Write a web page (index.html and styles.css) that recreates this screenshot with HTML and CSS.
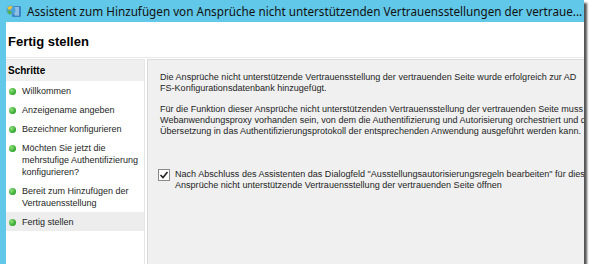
FILE: index.html
```html
<!DOCTYPE html>
<html lang="de">
<head>
    <meta charset="UTF-8">
    <title>Assistent</title>
    <link rel="stylesheet" href="styles.css">
</head>
<body>
<div class="window">
    <div class="titlebar">
        <svg class="app-icon" width="16" height="14" viewBox="0 0 16 14">
            <rect x="6" y="2" width="9" height="11" rx="1" fill="#3d86c6"/>
            <path d="M8 4h5M8 6h5M8 8h5M8 10h5M10 3v9M12 3v9" stroke="#bfe0f6" stroke-width="0.8"/>
            <circle cx="5" cy="6" r="4.5" fill="#4aa3d8"/>
            <path d="M1.5 3.5 Q4 1 6.5 2.5 L5 5.5 L2 5.5 Z" fill="#f2c335"/>
            <path d="M1 7 L4.5 6.5 L6 9.5 L3.5 10.5 Q1.5 9.5 1 7 Z" fill="#56b04a"/>
        </svg>
        <span class="title-text">Assistent zum Hinzufügen von Ansprüche nicht unterstützenden Vertrauensstellungen der vertraue...</span>
    </div>
    <div class="content">
        <div class="header">Fertig stellen</div>
        <div class="main">
            <div class="steps">
                <div class="steps-head">Schritte</div>
                <ul class="step-list">
                    <li>Willkommen</li>
                    <li>Anzeigename angeben</li>
                    <li>Bezeichner konfigurieren</li>
                    <li>Möchten Sie jetzt die<br>mehrstufige Authentifizierung<br>konfigurieren?</li>
                    <li>Bereit zum Hinzufügen der<br>Vertrauensstellung</li>
                    <li class="current">Fertig stellen</li>
                </ul>
            </div>
            <div class="panel">
                <p>Die Ansprüche nicht unterstützende Vertrauensstellung der vertrauenden Seite wurde erfolgreich zur AD<br>FS-Konfigurationsdatenbank hinzugefügt.</p>
                <p>Für die Funktion dieser Ansprüche nicht unterstützenden Vertrauensstellung der vertrauenden Seite muss ein<br>Webanwendungsproxy vorhanden sein, von dem die Authentifizierung und Autorisierung orchestriert und die<br>Übersetzung in das Authentifizierungsprotokoll der entsprechenden Anwendung ausgeführt werden kann.</p>
                <label class="check-row">
                    <span class="checkbox">
                        <svg width="10" height="10" viewBox="0 0 10 10"><path d="M1.5 5 L4 7.5 L8.5 2" fill="none" stroke="#222" stroke-width="1.6"/></svg>
                    </span>
                    <span>Nach Abschluss des Assistenten das Dialogfeld "Ausstellungsautorisierungsregeln bearbeiten" für diesen<br>Ansprüche nicht unterstützende Vertrauensstellung der vertrauenden Seite öffnen</span>
                </label>
            </div>
        </div>
    </div>
</div>
</body>
</html>
```

FILE: styles.css
```css
* {
    box-sizing: border-box;
    margin: 0;
    padding: 0;
}

body {
    background-color: #fff;
    font-family: "Liberation Sans", Arial, sans-serif;
    color: #1e1e1e;
}

.window {
    width: 584px;
    height: 264px;
    background-color: #62c8e9;
    box-shadow: 3px 3px 2px rgba(30, 30, 30, .75);
    display: flex;
    flex-direction: column;
}

.titlebar {
    height: 22px;
    display: flex;
    align-items: center;
    padding-left: 6px;
    gap: 5px;
    white-space: nowrap;
    overflow: hidden;
}

.app-icon {
    flex-shrink: 0;
}

.title-text {
    font-family: "Noto Sans", "Open Sans", sans-serif;
    font-size: 11.7px;
    color: #111;
}

.content {
    flex: 1;
    margin-left: 6px;
    background-color: #fff;
    display: flex;
    flex-direction: column;
    min-height: 0;
}

.header {
    height: 36px;
    padding: 3px 0 0 2px;
    display: flex;
    align-items: center;
    font-size: 13px;
    font-weight: bold;
    color: #000;
    border-bottom: 1px solid #e8e8e8;
}

.main {
    flex: 1;
    display: flex;
    gap: 2px;
    padding-top: 1px;
    min-height: 0;
    font-size: 9px;
}

.steps {
    width: 139px;
    border-top: 1px solid #e6e6e6;
    border-right: 1px solid #e6e6e6;
}

.steps-head {
    height: 21px;
    line-height: 21px;
    padding-left: 2px;
    font-size: 10px;
    font-weight: bold;
    color: #000;
    background-color: #efefef;
}

.step-list {
    list-style: none;
}

.step-list li {
    position: relative;
    padding: 4px 0 3px 16px;
    line-height: 12px;
}

.step-list li::before {
    content: "";
    position: absolute;
    left: 3px;
    top: 7px;
    width: 7px;
    height: 7px;
    border-radius: 50%;
    background: radial-gradient(circle at 35% 35%, #8fe07a, #2fa52c 70%);
}

.step-list li.current {
    background-color: #ededed;
}

.panel {
    flex: 1;
    background-color: #f0f0f0;
    border: 1px solid #dadada;
    border-right: none;
    border-bottom: none;
    padding: 12px 0 0 12px;
    overflow: hidden;
    white-space: nowrap;
    line-height: 11px;
    font-size: 9.05px;
}

.panel p {
    margin-bottom: 10px;
}

.check-row {
    display: flex;
    align-items: flex-start;
    gap: 5px;
    margin-top: 32px;
    margin-left: -2px;
}

.checkbox {
    width: 12px;
    height: 12px;
    flex-shrink: 0;
    border: 1px solid #8a8a8a;
    background-color: #fff;
    display: flex;
    align-items: center;
    justify-content: center;
}
```
